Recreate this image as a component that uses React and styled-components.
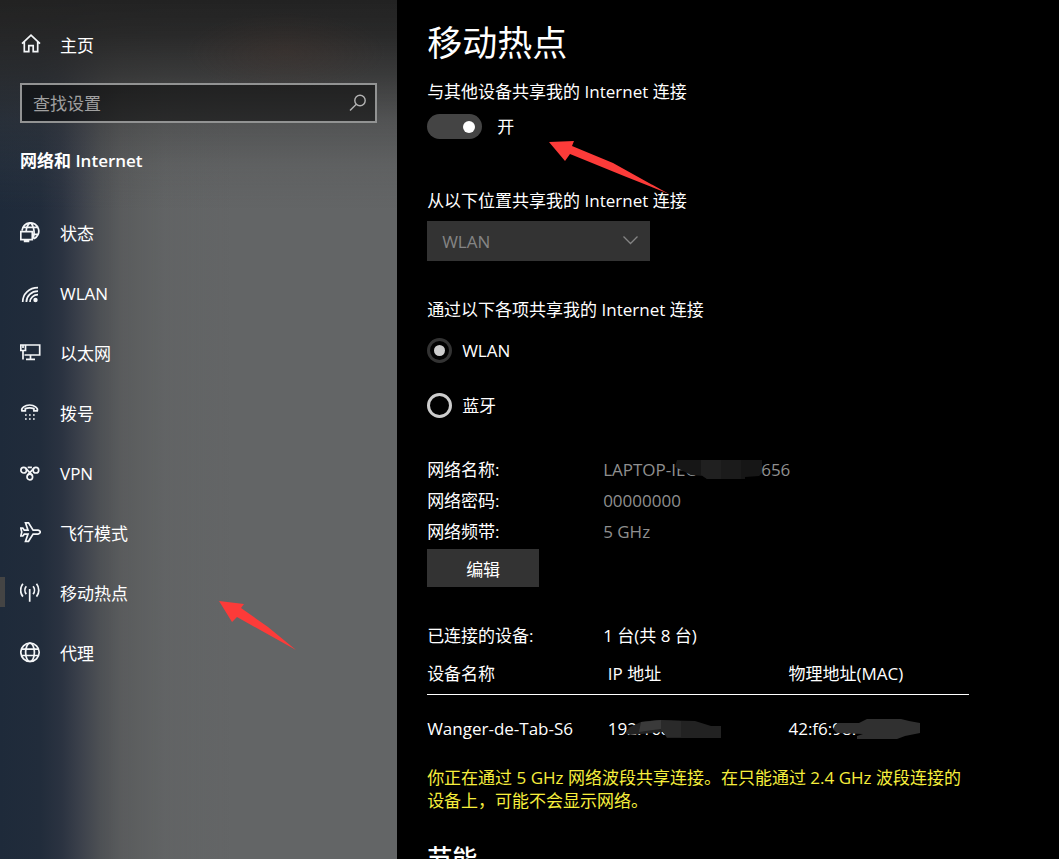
import { useState } from 'react';
import styled, { createGlobalStyle } from 'styled-components';

const GlobalStyle = createGlobalStyle`
    html, body {
        margin: 0;
        background: #000;
    }
    *, *::before, *::after {
        box-sizing: border-box;
    }
    body, input, select, button {
        font-family: "Open Sans", "Noto Sans CJK SC", sans-serif;
        font-size: 17px;
        line-height: 24px;
        color: #fff;
    }
`;

const Page = styled.div`
    display: flex;
    height: 100vh;
    overflow: hidden;
`;

const Sidebar = styled.aside`
    flex: 0 0 37.5%;
    padding-top: 15px;
    overflow: hidden;
    background:
        radial-gradient(ellipse 100px 40px at 72% 52px, rgba(80, 55, 45, 0.25), transparent),
        linear-gradient(to bottom, #222 0, rgba(38, 38, 38, 0.95) 35px, rgba(44, 44, 44, 0.75) 75px, rgba(55, 55, 55, 0.4) 120px, rgba(70, 70, 70, 0.15) 165px, transparent 210px),
        linear-gradient(to right, #1e2a3a 0, #212c3b 40px, #2b3341 62px, #3d424c 82px, #4d5054 100px, rgba(86, 88, 89, 0.7) 122px, rgba(94, 96, 97, 0.3) 165px, transparent 230px),
        #636566;
`;

const HomeLink = styled.a`
    display: flex;
    align-items: center;
    gap: 19px;
    height: 60px;
    padding: 2px 20px 0;
    color: #fff;
    text-decoration: none;
`;

const SearchBox = styled.label`
    display: flex;
    align-items: center;
    height: 40px;
    margin: 8px 20px 0;
    padding: 0 8px 0 11px;
    border: 2px solid #929393;
    background: rgba(0, 0, 0, 0.48);

    input {
        flex: 1;
        min-width: 0;
        padding: 2px 0 0;
        border: 0;
        outline: 0;
        background: transparent;
    }
    input::placeholder {
        color: #a0a0a0;
        opacity: 1;
    }
`;

const SidebarTitle = styled.h2`
    margin: 26px 20px 30px;
    font-size: 17px;
    font-weight: 700;
    line-height: 24px;

    span {
        font-weight: 600;
    }
`;

const NavItem = styled.a`
    position: relative;
    display: flex;
    align-items: center;
    gap: 19px;
    height: 60px;
    padding: 2px 20px 0;
    color: #fff;
    text-decoration: none;

    &[aria-current='page']::before {
        content: '';
        position: absolute;
        left: 0;
        top: 14px;
        width: 5px;
        height: 30px;
        background: #444;
    }
`;

const Glyph = styled.svg`
    flex: none;
    width: 21px;
    height: 21px;
    margin-bottom: 4px;
    fill: none;
    stroke: #f4f6f8;
    stroke-width: 1.7;
`;

const Arrow = styled.svg`
    position: absolute;
    left: ${(p) => p.$left}px;
    top: ${(p) => p.$top}px;
    fill: #fc3b39;
    pointer-events: none;
`;

const Main = styled.main`
    flex: 1;
    min-width: 0;
    padding: 18px 30px 40px;
    overflow-y: auto;
    scrollbar-width: none;
    background: #000;
`;

const Title = styled.h1`
    margin: 0 0 12px;
    font-size: 35px;
    font-weight: 400;
    line-height: 50px;
`;

const SectionTitle = styled.h2`
    margin: 29px 0 0;
    font-size: 25px;
    font-weight: 500;
    line-height: 34px;
`;

const Label = styled.label`
    display: block;
`;

const ToggleRow = styled.div`
    position: relative;
    display: flex;
    align-items: center;
    gap: 15px;
    height: 25px;
    margin: 10px 0 50px;
`;

const Toggle = styled.input`
    appearance: none;
    display: flex;
    align-items: center;
    justify-content: flex-start;
    width: 55px;
    height: 25px;
    margin: 0;
    padding: 0 7px;
    border-radius: 13px;
    background: #444;

    &:checked {
        justify-content: flex-end;
    }
    &::before {
        content: '';
        width: 12px;
        height: 12px;
        border-radius: 50%;
        background: #fff;
    }
`;

const SelectBox = styled.div`
    position: relative;
    width: 223px;
    margin: 8px 0 37px;

    select {
        display: block;
        appearance: none;
        width: 100%;
        height: 40px;
        padding: 2px 15px 0;
        border: 0;
        border-radius: 0;
        background: #333;
        color: #858585;
        opacity: 1;
    }
    svg {
        position: absolute;
        right: 11px;
        top: 14px;
        pointer-events: none;
    }
`;

const RadioGroup = styled.fieldset`
    display: flex;
    flex-direction: column;
    gap: 30px;
    margin: 0 0 36px;
    padding: 0;
    border: 0;

    legend {
        padding: 0;
        margin-bottom: 16px;
    }
    label {
        display: flex;
        align-items: center;
        gap: 10px;
        height: 25px;
    }
`;

const Radio = styled.input`
    appearance: none;
    display: grid;
    place-items: center;
    width: 25px;
    height: 25px;
    margin: 0;
    border: 3px solid #ccc;
    border-radius: 50%;

    &:checked {
        border-color: #333;
    }
    &:checked::before {
        content: '';
        width: 11px;
        height: 11px;
        border-radius: 50%;
        background: #ccc;
    }
`;

const InfoList = styled.dl`
    display: grid;
    grid-template-columns: 176px 1fr;
    margin: 0;
    line-height: ${(p) => p.$line}px;

    dt, dd {
        margin: 0;
    }
    dd {
        color: ${(p) => p.$color};
    }
`;

const EditButton = styled.button`
    display: block;
    width: 112px;
    height: 38px;
    margin: 2px 0 37px;
    padding: 3px 0 0;
    border: 0;
    background: #333;
`;

const Masked = styled.span`
    display: inline-flex;
    align-items: center;

    svg {
        margin: 0 ${(p) => p.$after}px 0 ${(p) => p.$before}px;
    }
`;

const DeviceTable = styled.table`
    width: 100%;
    max-width: 542px;
    margin-top: 6px;
    border-collapse: collapse;
    table-layout: fixed;

    th, td {
        padding: 0;
        font-weight: 400;
        text-align: left;
        white-space: nowrap;
    }
    th {
        height: 40px;
        border-bottom: 1px solid #fff;
    }
    td {
        height: 69px;
    }
`;

const Warning = styled.p`
    max-width: 544px;
    margin: 3px 0 0;
    line-height: 23px;
    color: #f6ee3c;
`;

const icons = {
    home: (
        <path d="M2 9.6 11 1.2l9 8.4M4.3 8v9.6h4.5v-6h4.4v6h4.5V8" />
    ),
    status: (
        <>
            <path d="M2 8.6a8.4 8.4 0 1 1 12 8.2M10.3.8C7.500 2.600 6.400 5.600 6.200 9.200M10.300.8c3.600 2.600 5 11 2.500 16M3 5.400h14.600M12.500 12.300h6" />
            <path d="M.8 9.600h11.500v8H.8zM6.500 17.600v2M3.800 19.400h5.500" />
        </>
    ),
    wlan: (
        <>
            <path d="M2.700 20C2.700 12 9 5.700 18 5.700M6.400 20c0-6 5-10.800 11.600-10.800M10 20c0-4 3.600-7.300 8-7.300" />
            <circle cx="15.500" cy="18" r="2.200" fill="#f4f6f8" stroke="none" />
        </>
    ),
    ethernet: (
        <path d="M5.500 3h14.200v10H4.500M.8 3h4.700v5.500H.8zM3 3v3M3 8.500v9M10.500 13v4M6 17.400h9" />
    ),
    dialup: (
        <>
            <path d="M1.900 8.800c-1-2.600 3-5.800 7.700-5.800s8.700 3.200 7.700 5.800h-3.400V6.600c-2.600-1-6-1-8.600 0v2.200z" />
            <path d="M5 13h10M5 17h10" strokeDasharray="1.700 2.300" />
        </>
    ),
    vpn: (
        <>
            <circle cx="3.700" cy="8.200" r="2.800" />
            <circle cx="15.900" cy="8.200" r="2.800" />
            <circle cx="9.800" cy="15" r="2.800" />
            <path d="M5.500 6.100 12.100 13.200M14.100 6.100 7.500 13.200M7.700 5.400h4.200" />
        </>
    ),
    airplane: (
        <path d="M5.500.8h3l4.600 7.300H18c3 .6 3 3.400 0 4h-4.900l-4.600 7.200h-3L8 12.100H4.300L2.800 14H.8l1-3.900-1-3.900h2l1.500 1.900H8z" />
    ),
    hotspot: (
        <path d="M9.700 7v12.700M2.900 1.800c-3 3.600-3 9.200 0 12.800M6.300 4.300c-1.800 2.200-1.800 5.600 0 7.800M16.500 1.800c3 3.600 3 9.200 0 12.800M13.100 4.300c1.800 2.200 1.800 5.600 0 7.800" />
    ),
    proxy: (
        <>
            <circle cx="10" cy="10.300" r="9.200" />
            <ellipse cx="10" cy="10.300" rx="4.400" ry="9.200" />
            <path d="M1.500 7.100h17M1.500 13.500h17" />
        </>
    ),
};

const navItems = [
    { icon: 'status', text: '状态' },
    { icon: 'wlan', text: 'WLAN' },
    { icon: 'ethernet', text: '以太网' },
    { icon: 'dialup', text: '拨号' },
    { icon: 'vpn', text: 'VPN' },
    { icon: 'airplane', text: '飞行模式' },
    { icon: 'hotspot', text: '移动热点', current: true },
    { icon: 'proxy', text: '代理' },
];

function Icon({ name }) {
    return (
        <Glyph viewBox="0 0 21 21" aria-hidden="true">
            {icons[name]}
        </Glyph>
    );
}

export default function App() {
    const [shared, setShared] = useState(true);
    const [via, setVia] = useState('wlan');

    return (
        <Page lang="zh-CN">
            <GlobalStyle />
            <Sidebar>
                <HomeLink href="#home">
                    <Icon name="home" />
                    主页
                </HomeLink>
                <SearchBox>
                    <input type="text" placeholder="查找设置" aria-label="查找设置" />
                    <svg width="18" height="18" viewBox="0 0 18 18" fill="none" stroke="#b4b4b4" strokeWidth="1.4">
                        <circle cx="11" cy="6.500" r="5.200" />
                        <path d="M7.300 10.300 1 16.500" />
                    </svg>
                </SearchBox>
                <SidebarTitle>网络和 <span>Internet</span></SidebarTitle>
                <nav>
                    {navItems.map((item) => (
                        <NavItem key={item.icon} href={`#${item.icon}`} aria-current={item.current ? 'page' : undefined}>
                            <Icon name={item.icon} />
                            {item.text}
                            {item.current && (
                                <Arrow $left={219} $top={38} width="78" height="50" viewBox="0 0 78 50">
                                    <path d="M0 0 25 3 22 7 49 26 77 49 43 30 18 16 13 21z" />
                                </Arrow>
                            )}
                        </NavItem>
                    ))}
                </nav>
            </Sidebar>
            <Main>
                <Title>移动热点</Title>
                <Label htmlFor="share">与其他设备共享我的 Internet 连接</Label>
                <ToggleRow>
                    <Toggle
                        type="checkbox"
                        role="switch"
                        id="share"
                        checked={shared}
                        onChange={(e) => setShared(e.target.checked)}
                    />
                    <span>{shared ? '开' : '关'}</span>
                    <Arrow $left={122} $top={27} width="120" height="54" viewBox="0 0 120 54">
                        <path d="M0 1 25 0 23 5 64 22 120 53 75 35 21 13 16 20z" />
                    </Arrow>
                </ToggleRow>

                <Label htmlFor="source">从以下位置共享我的 Internet 连接</Label>
                <SelectBox>
                    <select id="source" disabled>
                        <option>WLAN</option>
                    </select>
                    <svg width="17" height="11" viewBox="0 0 17 11" fill="none" stroke="#858585" strokeWidth="1.3">
                        <path d="M1.500 1.500 8.500 8.500l7-7" />
                    </svg>
                </SelectBox>

                <RadioGroup>
                    <legend>通过以下各项共享我的 Internet 连接</legend>
                    <label>
                        <Radio type="radio" name="via" checked={via === 'wlan'} onChange={() => setVia('wlan')} />
                        WLAN
                    </label>
                    <label>
                        <Radio type="radio" name="via" checked={via === 'bluetooth'} onChange={() => setVia('bluetooth')} />
                        蓝牙
                    </label>
                </RadioGroup>

                <InfoList $line={31} $color="#8f8f8f">
                    <dt>网络名称:</dt>
                    <dd>
                        <Masked $before={-21} $after={-2}>
                            LAPTOP-IEC
                            <svg width="88" height="21" viewBox="0 0 88 21" aria-hidden="true">
                                <path d="M2 1H87V14L84 17 70 18V20H32L28 17 16 16 0 8z" fill="#161616" />
                                <path d="M26 1H46V20H32L26 16z" fill="#202020" />
                                <path d="M46 1H66V20H46z" fill="#1b1b1b" />
                            </svg>
                            656
                        </Masked>
                    </dd>
                    <dt>网络密码:</dt>
                    <dd>00000000</dd>
                    <dt>网络频带:</dt>
                    <dd>5 GHz</dd>
                </InfoList>
                <EditButton type="button">编辑</EditButton>

                <InfoList $line={24} $color="#fff">
                    <dt>已连接的设备:</dt>
                    <dd>1 台(共 8 台)</dd>
                </InfoList>
                <DeviceTable>
                    <thead>
                        <tr>
                            <th>设备名称</th>
                            <th>IP 地址</th>
                            <th>物理地址(MAC)</th>
                        </tr>
                    </thead>
                    <tbody>
                        <tr>
                            <td>Wanger-de-Tab-S6</td>
                            <td>
                                <Masked $before={-50} $after={0}>
                                    192.168.
                                    <svg width="96" height="20" viewBox="0 0 96 20" aria-hidden="true">
                                        <path d="M0 14 5 8 16 3 32 1 70 2 86 7H96V19H42L38 13 5 16z" fill="#222" />
                                        <path d="M16 3 36 1V10L14 13z" fill="#3a3a3a" />
                                        <path d="M36 1 56 2V18H42L36 11z" fill="#2a2a2a" />
                                    </svg>
                                </Masked>
                            </td>
                            <td>
                                <Masked $before={-23} $after={0}>
                                    42:f6:98:
                                    <svg width="88" height="22" viewBox="0 0 88 22" aria-hidden="true">
                                        <path d="M0 11 4 5 26 5 34 1H68L76 3 87 5V15L72 18 64 21H24V18L30 16 4 15z" fill="#303030" />
                                    </svg>
                                </Masked>
                            </td>
                        </tr>
                    </tbody>
                </DeviceTable>
                <Warning>
                    你正在通过 5 GHz 网络波段共享连接。在只能通过 2.4 GHz 波段连接的设备上，可能不会显示网络。
                </Warning>

                <SectionTitle>节能</SectionTitle>
            </Main>
        </Page>
    );
}
